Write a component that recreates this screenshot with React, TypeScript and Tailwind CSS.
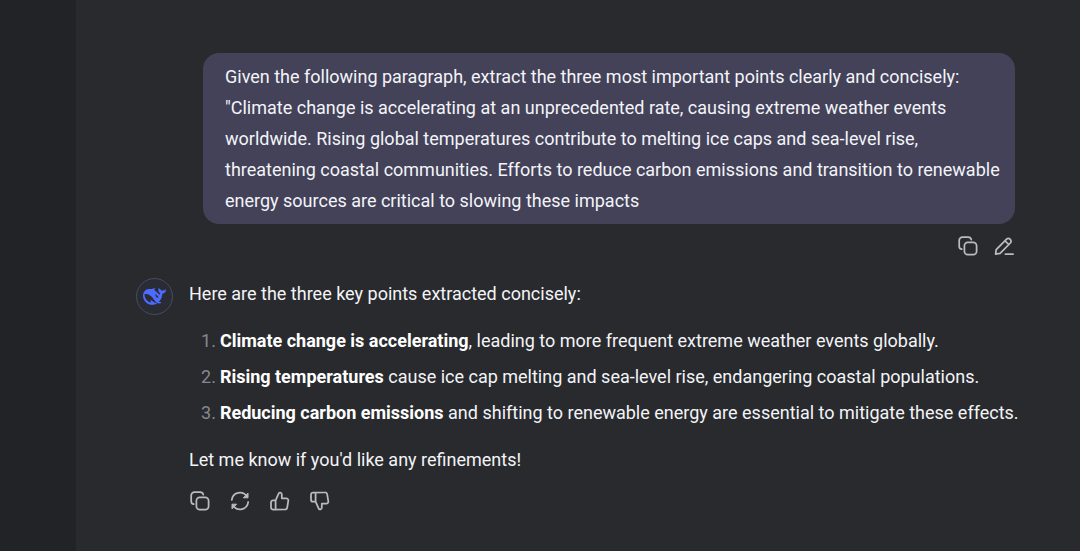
import type { ReactNode } from 'react';

const points = [
  { title: 'Climate change is accelerating', text: ', leading to more frequent extreme weather events globally.' },
  { title: 'Rising temperatures', text: ' cause ice cap melting and sea-level rise, endangering coastal populations.' },
  { title: 'Reducing carbon emissions', text: ' and shifting to renewable energy are essential to mitigate these effects.' },
];

interface IconButtonProps {
  label: string;
  children: ReactNode;
}

function IconButton({ label, children }: IconButtonProps) {
  return (
    <button type="button" aria-label={label} className="text-[#b9bbc0] hover:text-white">
      <svg
        viewBox="0 0 20 20"
        className="w-5 h-5"
        fill="none"
        stroke="currentColor"
        strokeWidth="1.75"
        strokeLinecap="round"
        strokeLinejoin="round"
      >
        {children}
      </svg>
    </button>
  );
}

function CopyButton() {
  return (
    <IconButton label="Copy">
      <rect x="6.4" y="6.4" width="12.2" height="12.2" rx="3.4" />
      <path d="M3.800 13.200A3 3 0 0 1 1.200 10.200V4.500A3.300 3.300 0 0 1 4.500 1.200h5.700A3.200 3.200 0 0 1 13.300 3.600" />
    </IconButton>
  );
}

function WhaleLogo() {
  return (
    <svg viewBox="0 0 24 24" className="w-[23px] h-[23px]" fill="#4d6bfe" aria-hidden="true">
      <path d="M23.748 4.482c-.254-.124-.364.113-.512.234-.051.039-.094.09-.137.136-.372.397-.806.657-1.373.626-.829-.046-1.537.214-2.163.848-.133-.782-.575-1.248-1.247-1.548-.352-.156-.708-.311-.955-.65-.172-.241-.219-.51-.305-.774-.055-.16-.11-.323-.293-.35-.2-.031-.278.136-.356.276-.313.572-.434 1.202-.422 1.84.027 1.436.633 2.58 1.838 3.393.137.093.172.187.129.323-.082.28-.18.552-.266.833-.055.179-.137.217-.329.14a5.526 5.526 0 01-1.736-1.18c-.857-.828-1.631-1.742-2.597-2.458a11.365 11.365 0 00-.689-.471c-.985-.957.13-1.743.388-1.836.27-.098.093-.432-.779-.428-.872.004-1.67.295-2.687.684a3.055 3.055 0 01-.465.137 9.597 9.597 0 00-2.883-.102c-1.885.21-3.39 1.102-4.497 2.623C.082 8.606-.231 10.684.152 12.85c.403 2.284 1.569 4.175 3.36 5.653 1.858 1.533 3.997 2.284 6.438 2.14 1.482-.085 3.133-.284 4.994-1.86.47.234.962.327 1.78.397.63.059 1.236-.03 1.705-.128.735-.156.684-.837.419-.961-2.155-1.004-1.682-.595-2.113-.926 1.096-1.296 2.746-2.642 3.392-7.003.05-.347.007-.565 0-.845-.004-.17.035-.237.23-.256a4.173 4.173 0 001.545-.475c1.396-.763 1.96-2.015 2.093-3.517.02-.23-.004-.467-.247-.588zM11.581 18c-2.089-1.642-3.102-2.183-3.52-2.16-.392.024-.321.471-.235.763.09.288.207.486.371.739.114.167.192.416-.113.603-.673.416-1.842-.14-1.897-.167-1.361-.802-2.5-1.86-3.301-3.307-.774-1.393-1.224-2.887-1.298-4.482-.02-.386.093-.522.477-.592a4.696 4.696 0 011.529-.039c2.132.312 3.946 1.265 5.468 2.774.868.86 1.525 1.887 2.202 2.891.72 1.066 1.494 2.082 2.48 2.914.348.292.625.514.891.677-.802.09-2.14.11-3.054-.614zm1-6.44a.306.306 0 01.415-.287.302.302 0 01.2.288.306.306 0 01-.31.307.303.303 0 01-.304-.308zm3.11 1.596c-.2.081-.399.151-.59.16a1.245 1.245 0 01-.798-.254c-.274-.23-.47-.358-.552-.758a1.73 1.73 0 01.016-.588c.07-.327-.008-.537-.239-.727-.187-.156-.426-.199-.688-.199a.559.559 0 01-.254-.078c-.11-.054-.2-.19-.114-.358.028-.054.16-.186.192-.21.356-.202.767-.136 1.146.016.352.144.618.408 1.001.782.391.451.462.576.685.914.176.265.336.537.445.848.067.195-.019.354-.25.452z" />
    </svg>
  );
}

function UserMessage() {
  return (
    <section className="flex flex-col items-end gap-3 pr-5 pl-[67px]">
      <div className="w-full rounded-2xl bg-[#434258] py-2 pr-3 pl-[22px]">
        <p>
          Given the following paragraph, extract the three most important points clearly and concisely:
          <br />
          "Climate change is accelerating at an unprecedented rate, causing extreme weather events
          worldwide. Rising global temperatures contribute to melting ice caps and sea-level rise,
          threatening coastal communities. Efforts to reduce carbon emissions and transition to renewable
          energy sources are critical to slowing these impacts
        </p>
      </div>
      <div className="flex gap-4 pr-px">
        <CopyButton />
        <IconButton label="Edit">
          <path d="M1.600 18.200l.6-4.500L12.600 3.200a2.400 2.400 0 0 1 3.400 0l.4.4a2.400 2.400 0 0 1 0 3.400L6.100 17.400zM11.200 5l3.400 3.400M11.400 18.200h7.600" />
        </IconButton>
      </div>
    </section>
  );
}

function AssistantMessage() {
  return (
    <section className="flex items-start gap-4">
      <div className="flex w-[37px] h-[37px] shrink-0 items-center justify-center rounded-full border border-[#464c60] bg-[#2a2c35]">
        <WhaleLogo />
      </div>
      <div className="flex min-w-0 flex-1 flex-col">
        <p>Here are the three key points extracted concisely:</p>
        <ol className="my-4 flex list-none flex-col gap-[5px] pl-3">
          {points.map((point, index) => (
            <li key={point.title} className="flex gap-1">
              <span className="text-[#87888d]">{index + 1}.</span>
              <p>
                <strong className="font-bold text-white">{point.title}</strong>
                {point.text}
              </p>
            </li>
          ))}
        </ol>
        <p>Let me know if you'd like any refinements!</p>
        <div className="mt-4 flex gap-5 pl-px">
          <CopyButton />
          <IconButton label="Regenerate">
            <path d="M1.800 9A8.200 8.200 0 0 1 16.700 5.200M18.200 11A8.200 8.200 0 0 1 3.300 14.800" />
            <path d="M18 2.500v4.300h-4.300zM2 17.500v-4.300h4.300z" fill="currentColor" strokeWidth="1" />
          </IconButton>
          <IconButton label="Like">
            <path d="M5.600 9.300L8.600 2.600c.5-1.500 3.200-1.200 3.200 1v3.700h4.400a2.100 2.100 0 0 1 2.100 2.400l-1.100 7a2.100 2.100 0 0 1-2.100 1.800H3a2 2 0 0 1-2-2v-5.200a2 2 0 0 1 2-2zM5.600 9.300v9.200" />
          </IconButton>
          <IconButton label="Dislike">
            <path d="M5.600 10.700L8.600 17.400c.5 1.500 3.200 1.200 3.200-1v-3.700h4.400a2.100 2.100 0 0 0 2.100-2.400l-1.100-7a2.100 2.100 0 0 0-2.100-1.800H3a2 2 0 0 0-2 2v5.200a2 2 0 0 0 2 2zM5.600 10.700V1.500" />
          </IconButton>
        </div>
      </div>
    </section>
  );
}

export default function App() {
  return (
    <div className="flex min-h-screen bg-[#292a2d] font-['Roboto',sans-serif] text-[18px] leading-[31px] text-[#f3f4f8]">
      <aside className="w-[76px] shrink-0 bg-[#212327]" />
      <main className="flex min-w-0 flex-1 flex-col gap-[22px] pt-[53px] pr-[45px] pb-8 pl-[60px]">
        <UserMessage />
        <AssistantMessage />
      </main>
    </div>
  );
}
